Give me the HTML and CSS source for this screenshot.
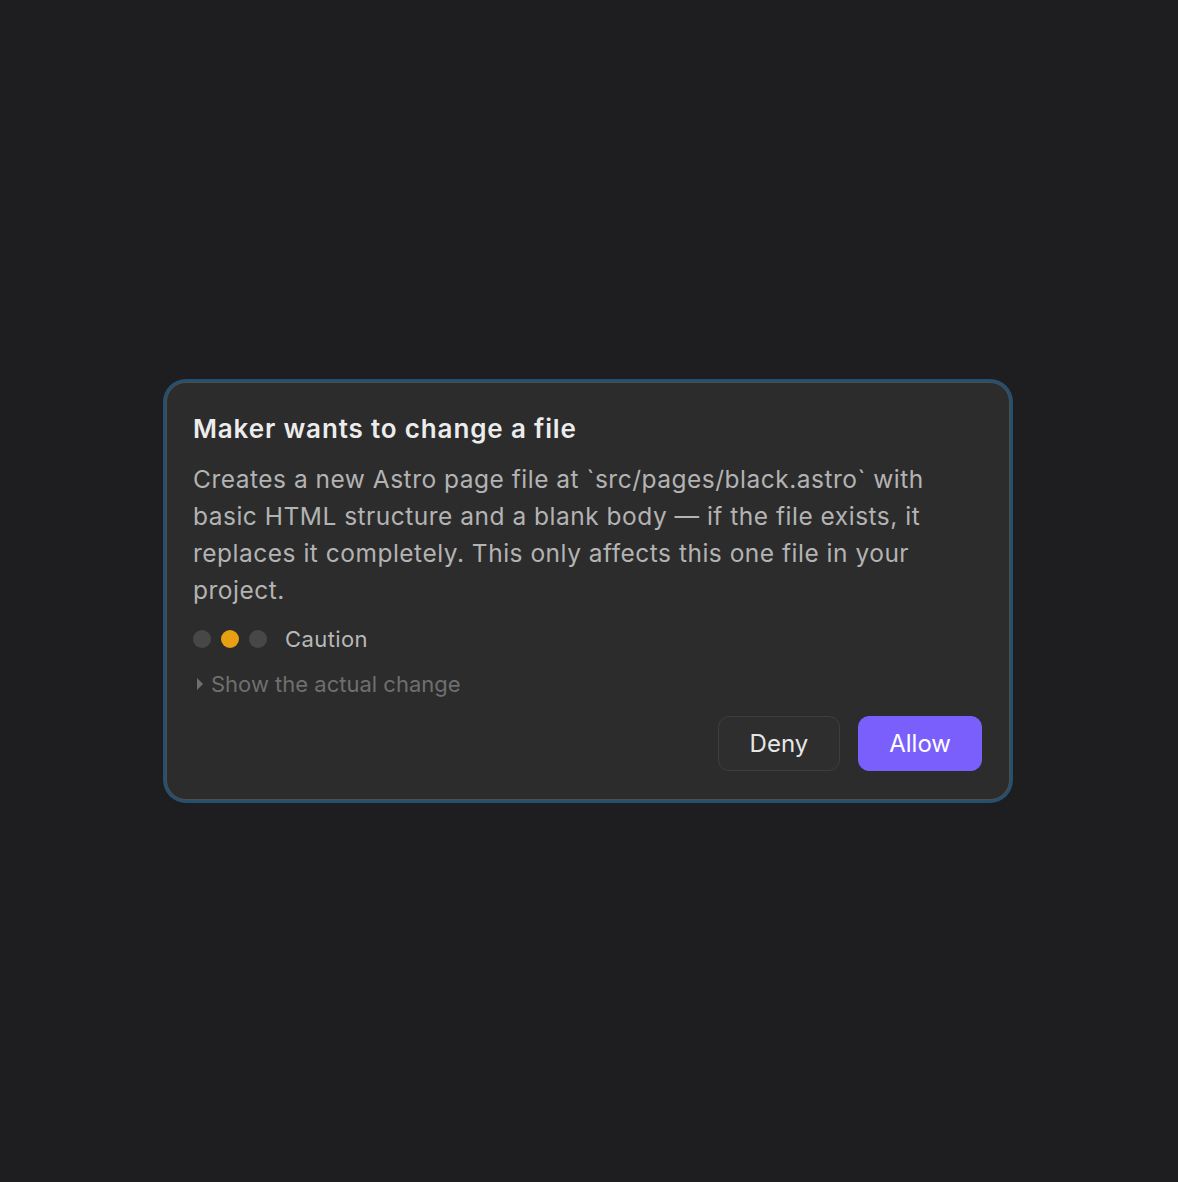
FILE: index.html
```html
<!DOCTYPE html>
<html lang="en">
<head>
<meta charset="UTF-8">
<title>Permission request</title>
<link rel="stylesheet" href="styles.css">
</head>
<body>
<div class="screen">
    <div class="prompt">
        <h2 class="prompt-title">Maker wants to change a file</h2>
        <p class="prompt-desc">Creates a new Astro page file at `src/pages/black.astro` with basic HTML structure and a blank body — if the file exists, it replaces it completely. This only affects this one file in your project.</p>
        <div class="risk">
            <span class="dot"></span>
            <span class="dot on"></span>
            <span class="dot"></span>
            <span class="risk-label">Caution</span>
        </div>
        <details class="change">
            <summary>Show the actual change</summary>
        </details>
        <div class="actions">
            <button class="btn deny">Deny</button>
            <button class="btn allow">Allow</button>
        </div>
    </div>
</div>
</body>
</html>
```

FILE: styles.css
```css
html, body {
    margin: 0;
    height: 100%;
    background: #1e1e20;
    font-family: Inter, "Noto Sans", sans-serif;
}

.screen {
    height: 100%;
    display: flex;
    align-items: center;
    justify-content: center;
    padding-right: 2px;
    box-sizing: border-box;
}

.prompt {
    width: 789px;
    padding: 29px 27px 28px 26px;
    background: #2c2c2c;
    border: 1px solid #4e4e4e;
    border-radius: 20px;
    box-shadow: 0 0 0 3px #27506f;
}

.prompt-title {
    margin: 0;
    font-size: 26px;
    font-weight: 600;
    line-height: 34px;
    letter-spacing: 0.85px;
    color: #ececec;
}

.prompt-desc {
    margin: 15px 0 0;
    font-size: 24.5px;
    line-height: 37px;
    letter-spacing: 0.5px;
    color: #b3b3b3;
}

.risk {
    display: flex;
    align-items: center;
    gap: 10px;
    margin-top: 17px;
}
.dot {
    width: 18px;
    height: 18px;
    border-radius: 50%;
    background: #474747;
}
.dot.on {
    background: #e6a012;
}
.risk-label {
    margin-left: 8px;
    font-size: 22px;
    letter-spacing: 0.4px;
    color: #b8b8b8;
}

.change {
    margin-top: 19px;
}
.change summary {
    list-style: none;
    display: flex;
    align-items: center;
    gap: 8px;
    font-size: 22px;
    color: #6f6f6f;
    cursor: pointer;
}
.change summary::before {
    content: "";
    width: 0;
    height: 0;
    margin-left: 4px;
    border-top: 6px solid transparent;
    border-bottom: 6px solid transparent;
    border-left: 6px solid #6f6f6f;
}

.actions {
    display: flex;
    justify-content: flex-end;
    gap: 18px;
    margin-top: 19px;
}
.btn {
    height: 55px;
    padding: 0 31px;
    border-radius: 11px;
    font-family: inherit;
    font-size: 24px;
}
.deny {
    background: #2e2e2e;
    border: 1px solid #3e3e3e;
    color: #e6e6e6;
}
.allow {
    padding: 0 30px;
    background: #7a5ffd;
    border: 1px solid #7a5ffd;
    color: #ffffff;
}
```
